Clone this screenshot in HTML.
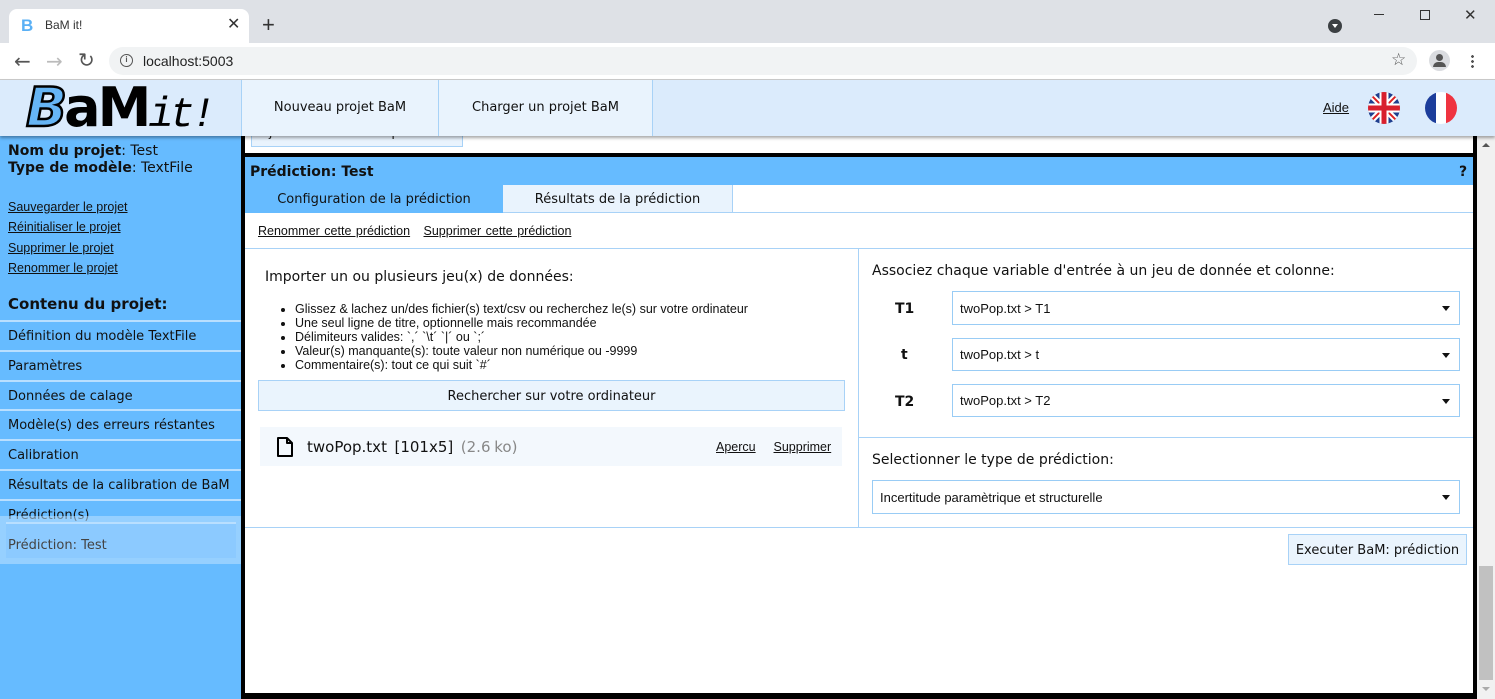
<!DOCTYPE html>
<html><head><meta charset="utf-8"><style>
*{box-sizing:border-box;margin:0;padding:0}
body{width:1495px;height:699px;overflow:hidden;position:relative;font-family:"DejaVu Sans","Liberation Sans",sans-serif;font-size:13px;color:#111;background:#fff}
.a{position:absolute}
u{text-decoration:underline}
.sel{position:absolute;border:1px solid #99ccf5;background:#fff;font-family:"Liberation Sans",sans-serif;font-size:13px;padding-left:7px;display:flex;align-items:center}
.sel:after{content:"";position:absolute;right:9px;top:50%;margin-top:-2px;border-left:4px solid transparent;border-right:4px solid transparent;border-top:5px solid #111}
.side div.it{position:absolute;left:0;width:241px;height:30px;border-top:2px solid #b9dfff;padding-left:8px;display:flex;align-items:center;font-size:13px;color:#111}
</style></head><body>
<!-- chrome -->
<div class="a" style="left:0;top:0;width:1495px;height:43px;background:#dee1e6"></div>
<div class="a" style="left:9px;top:9px;width:240px;height:34px;background:#fff;border-radius:8px 8px 0 0"></div>
<div class="a" style="left:21px;top:16px;font:bold 17px 'Liberation Sans',sans-serif;color:#5ab0f5">B</div>
<div class="a" style="left:45px;top:18px;font:12px 'Liberation Sans',sans-serif;color:#333">BaM it!</div>
<div class="a" style="left:227px;top:14px;font:16px 'Liberation Sans',sans-serif;color:#333">✕</div>
<div class="a" style="left:262px;top:12px;font:22px 'Liberation Sans',sans-serif;color:#333">+</div>
<div class="a" style="left:1328px;top:19px;width:14px;height:14px;border-radius:50%;background:#3c4043"></div>
<div class="a" style="left:1332px;top:24px;border-left:3px solid transparent;border-right:3px solid transparent;border-top:4px solid #fff"></div>
<div class="a" style="left:1374px;top:14px;width:10px;height:1px;background:#333"></div>
<div class="a" style="left:1420px;top:10px;width:10px;height:10px;border:1px solid #333"></div>
<div class="a" style="left:1464px;top:6px;font:15px 'Liberation Sans',sans-serif;color:#333">✕</div>
<div class="a" style="left:0;top:43px;width:1495px;height:37px;background:#fff;border-bottom:1px solid #ccc"></div>
<div class="a" style="left:14px;top:49px;font:20px 'DejaVu Sans',sans-serif;color:#555">←</div>
<div class="a" style="left:46px;top:49px;font:20px 'DejaVu Sans',sans-serif;color:#bbb">→</div>
<div class="a" style="left:78px;top:48px;font:20px 'DejaVu Sans',sans-serif;color:#555">↻</div>
<div class="a" style="left:109px;top:47px;width:1308px;height:28px;border-radius:14px;background:#f1f3f4"></div>
<div class="a" style="left:120px;top:54px;width:13px;height:13px;border:1.5px solid #555;border-radius:50%;font:bold 8px sans-serif;text-align:center;line-height:10px;color:#555">i</div>
<div class="a" style="left:143px;top:53px;font:14px 'Liberation Sans',sans-serif;color:#222">localhost:5003</div>
<div class="a" style="left:1391px;top:50px;font:17px 'DejaVu Sans',sans-serif;color:#555">☆</div>
<div class="a" style="left:1429px;top:50px;width:21px;height:21px;border-radius:50%;background:#dadce0"></div>
<div class="a" style="left:1436px;top:54px;width:7px;height:7px;border-radius:50%;background:#555"></div>
<div class="a" style="left:1433px;top:62px;width:13px;height:5px;border-radius:6px 6px 0 0;background:#555"></div>
<div class="a" style="left:1471px;top:54px;width:3px;height:14px;background:radial-gradient(circle,#555 1.3px,transparent 1.5px) 0 0/3px 5px"></div>
<!-- app header -->
<div class="a" style="left:0;top:80px;width:1495px;height:56px;background:#dbebfc;box-shadow:0 2px 3px rgba(0,0,0,.35);z-index:5">
 <div class="a" style="left:26px;top:-4px;font:bold 54px 'DejaVu Sans',sans-serif;letter-spacing:-3px;color:#000;white-space:nowrap"><span style="color:#66b5f5;-webkit-text-stroke:2.5px #000;font-style:italic">B</span>aM<span style="font:italic 42px 'Liberation Mono',monospace;letter-spacing:-4px">it!</span></div>
 <div class="a" style="left:241px;top:0;width:198px;height:56px;background:#e9f3fd;border-left:1px solid #a8d2f7;border-right:1px solid #a8d2f7;text-align:center;line-height:56px">Nouveau projet BaM</div>
 <div class="a" style="left:439px;top:0;width:214px;height:56px;background:#e9f3fd;border-right:1px solid #a8d2f7;text-align:center;line-height:56px">Charger un projet BaM</div>
 <div class="a" style="left:1323px;top:20px;font:13px 'Liberation Sans',sans-serif"><u>Aide</u></div>
 <svg class="a" style="left:1368px;top:12px" width="32" height="32" viewBox="0 0 32 32"><defs><clipPath id="c"><circle cx="16" cy="16" r="16"/></clipPath></defs><g clip-path="url(#c)"><rect width="32" height="32" fill="#1f3f8f"/><path d="M0 0L32 32M32 0L0 32" stroke="#fff" stroke-width="6"/><path d="M0 0L32 32M32 0L0 32" stroke="#d22" stroke-width="2"/><path d="M16 0V32M0 16H32" stroke="#fff" stroke-width="9"/><path d="M16 0V32M0 16H32" stroke="#d8202e" stroke-width="5"/></g></svg>
 <svg class="a" style="left:1425px;top:12px" width="32" height="32" viewBox="0 0 32 32"><defs><clipPath id="d"><circle cx="16" cy="16" r="16"/></clipPath></defs><g clip-path="url(#d)"><rect width="11" height="32" fill="#1c3d9b"/><rect x="11" width="10" height="32" fill="#fff"/><rect x="21" width="11" height="32" fill="#ef3340"/></g></svg>
</div>
<!-- sidebar -->
<div class="a side" style="left:0;top:136px;width:241px;height:563px;background:#66bbff">
 <div class="a" style="left:8px;top:7px;font-size:14px;line-height:17px"><b>Nom du projet</b>: Test<br><b>Type de modèle</b>: TextFile</div>
 <div class="a" style="left:8px;top:61px;font:12.5px 'Liberation Sans',sans-serif;line-height:20.3px"><u>Sauvegarder le projet</u><br><u>Réinitialiser le projet</u><br><u>Supprimer le projet</u><br><u>Renommer le projet</u></div>
 <div class="a" style="left:8px;top:159px;font-weight:bold;font-size:15px">Contenu du projet:</div>
 <div class="it" style="top:184px">Définition du modèle TextFile</div>
 <div class="it" style="top:214px">Paramètres</div>
 <div class="it" style="top:244px">Données de calage</div>
 <div class="it" style="top:273px">Modèle(s) des erreurs réstantes</div>
 <div class="it" style="top:303px">Calibration</div>
 <div class="it" style="top:333px">Résultats de la calibration de BaM</div>
 <div class="it" style="top:363px">Prédiction(s)</div>
 <div class="a" style="left:0;top:380px;width:241px;height:48px;background:rgba(190,225,255,.55)"></div>
 <div class="a" style="left:6px;top:386px;width:230px;height:36px;background:#8ccaff;border-top:2px solid #b9dfff;padding-left:2px;padding-top:4px;line-height:36px;color:#444">Prédiction: Test</div>
</div>
<!-- main frame -->
<div class="a" style="left:241px;top:136px;width:1236px;height:563px;background:#000"></div>
<div class="a" style="left:245px;top:136px;width:1228px;height:17px;background:#fff"></div>
<div class="a" style="left:251px;top:118px;width:212px;height:29px;background:#e9f3fd;border:1px solid #a8d2f7;font-size:13px;padding:6px 8px;color:#222;white-space:nowrap;overflow:hidden">Ajouter un nouvelle prédiction</div>
<div class="a" style="left:245px;top:157px;width:1228px;height:536px;background:#fff"></div>
<div class="a" style="left:245px;top:157px;width:1228px;height:28px;background:#66bbff"></div>
<div class="a" style="left:250px;top:164px;font-weight:bold;font-size:14px">Prédiction: Test</div>
<div class="a" style="left:1459px;top:164px;font-weight:bold;font-size:14px">?</div>
<div class="a" style="left:245px;top:185px;width:258px;height:28px;background:#66bbff;text-align:center;line-height:30px">Configuration de la prédiction</div>
<div class="a" style="left:503px;top:185px;width:230px;height:28px;background:#e9f3fd;border-right:1px solid #a8d2f7;border-bottom:1px solid #a8d2f7;text-align:center;line-height:30px">Résultats de la prédiction</div>
<div class="a" style="left:733px;top:212px;width:740px;height:1px;background:#a8d2f7"></div>
<div class="a" style="left:258px;top:224px;font:12.5px 'Liberation Sans',sans-serif;word-spacing:1px"><u>Renommer cette prédiction</u>&nbsp;&nbsp;&nbsp;<u>Supprimer cette prédiction</u></div>
<div class="a" style="left:245px;top:248px;width:1228px;height:1px;background:#a8d2f7"></div>
<div class="a" style="left:858px;top:248px;width:1px;height:279px;background:#a8d2f7"></div>
<div class="a" style="left:245px;top:527px;width:1228px;height:1px;background:#a8d2f7"></div>
<!-- left panel -->
<div class="a" style="left:265px;top:269px;font-size:14px">Importer un ou plusieurs jeu(x) de données:</div>
<ul class="a" style="left:295px;top:302px;font:12.5px 'Liberation Sans',sans-serif;line-height:14px;list-style:disc">
<li>Glissez &amp; lachez un/des fichier(s) text/csv ou recherchez le(s) sur votre ordinateur</li>
<li>Une seul ligne de titre, optionnelle mais recommandée</li>
<li>Délimiteurs valides: `,´ `\t´ `|´ ou `;´</li>
<li>Valeur(s) manquante(s): toute valeur non numérique ou -9999</li>
<li>Commentaire(s): tout ce qui suit `#´</li></ul>
<div class="a" style="left:258px;top:380px;width:587px;height:31px;background:#eaf4fd;border:1px solid #a8d2f7;text-align:center;line-height:31px">Rechercher sur votre ordinateur</div>
<div class="a" style="left:260px;top:427px;width:582px;height:39px;background:#f3f8fd"></div>
<svg class="a" style="left:276px;top:437px" width="18" height="20" viewBox="0 0 18 20"><path d="M2 1H11L16 6V19H2Z M11 1V6H16" fill="none" stroke="#000" stroke-width="2" stroke-linejoin="round"/></svg>
<div class="a" style="left:307px;top:438px;font-size:15px;word-spacing:-1px">twoPop.txt&nbsp; [101x5]&nbsp; <span style="color:#888">(2.6 ko)</span></div>
<div class="a" style="left:716px;top:440px;font:12.5px 'Liberation Sans',sans-serif;word-spacing:1px"><u>Apercu</u>&nbsp;&nbsp;&nbsp;&nbsp;<u>Supprimer</u></div>
<!-- right panel -->
<div class="a" style="left:872px;top:263px;font-size:14px">Associez chaque variable d'entrée à un jeu de donnée et colonne:</div>
<div class="a" style="left:895px;top:301px;font-weight:bold;font-size:14px">T1</div>
<div class="a" style="left:901px;top:347px;font-weight:bold;font-size:14px">t</div>
<div class="a" style="left:895px;top:394px;font-weight:bold;font-size:14px">T2</div>
<div class="sel" style="left:952px;top:291px;width:508px;height:34px">twoPop.txt &gt; T1</div>
<div class="sel" style="left:952px;top:338px;width:508px;height:33px">twoPop.txt &gt; t</div>
<div class="sel" style="left:952px;top:384px;width:508px;height:33px">twoPop.txt &gt; T2</div>
<div class="a" style="left:859px;top:437px;width:614px;height:1px;background:#a8d2f7"></div>
<div class="a" style="left:872px;top:452px;font-size:14px">Selectionner le type de prédiction:</div>
<div class="sel" style="left:872px;top:480px;width:588px;height:34px">Incertitude paramètrique et structurelle</div>
<div class="a" style="left:1288px;top:534px;width:179px;height:31px;background:#eaf4fd;border:1px solid #a8d2f7;text-align:center;line-height:31px">Executer BaM: prédiction</div>
<!-- scrollbar -->
<div class="a" style="left:1477px;top:136px;width:18px;height:563px;background:#f1f1f1"></div>
<div class="a" style="left:1482px;top:143px;border-left:4px solid transparent;border-right:4px solid transparent;border-bottom:4px solid #555"></div>
<div class="a" style="left:1479px;top:566px;width:14px;height:114px;background:#c1c1c1"></div>
<div class="a" style="left:1482px;top:687px;border-left:4px solid transparent;border-right:4px solid transparent;border-top:4px solid #aaa"></div>
</body></html>
